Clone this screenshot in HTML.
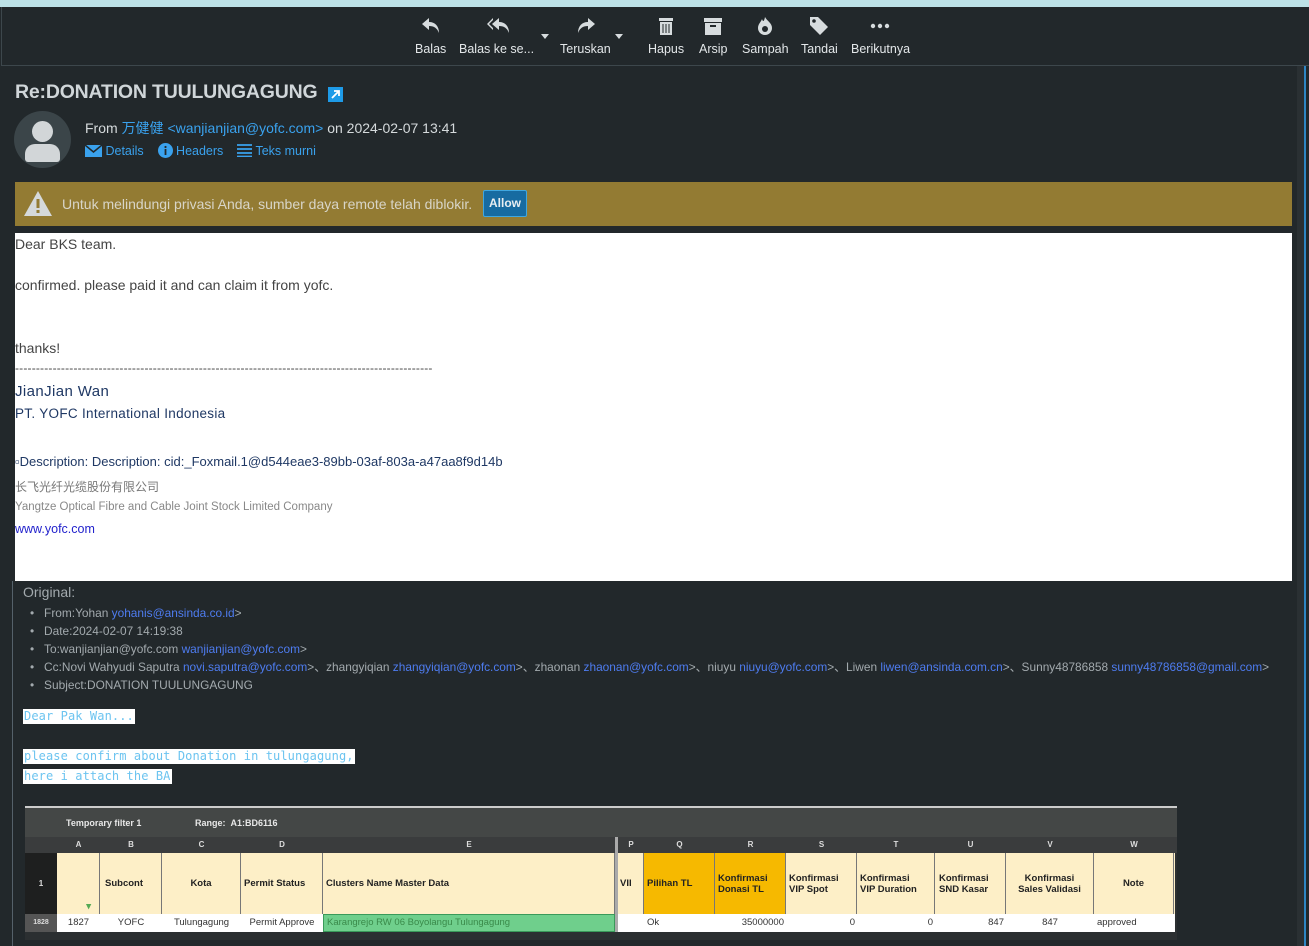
<!DOCTYPE html>
<html><head><meta charset="utf-8"><style>
*{margin:0;padding:0;box-sizing:border-box}
body{width:1309px;height:946px;overflow:hidden;background:#22282b;font-family:"Liberation Sans","Noto Sans CJK SC",sans-serif;position:relative;color:#d5dadc}
.abs{position:absolute}
.tb{position:absolute;top:0;left:0;width:1309px;height:7px;background:#bde2e7}
.tool{position:absolute;top:7px;left:1px;width:1308px;height:59px;border-bottom:1px solid #3d474c;border-left:1px solid #3d474c}
.btn{position:absolute;top:42px;font-size:12.5px;color:#e3e7e9;white-space:nowrap}
.ic{position:absolute;top:16px}
a,.lk{color:#3aa2ee;text-decoration:none}
.body{position:absolute;left:15px;top:233px;width:1277px;height:348px;background:#fff;color:#444;font-size:14px}
.orig{font-size:12px;color:#a3aaae;white-space:nowrap}
.orig .b{color:#4e7cf0}
.mono{font-family:"DejaVu Sans Mono","Liberation Mono",monospace;font-size:12px;color:#6cc4f0;background:#fff;position:absolute;left:23px;padding:0 1px;height:15px;line-height:15px;letter-spacing:.1px}
.cell{position:absolute;font-family:"Liberation Sans",sans-serif;font-size:9.5px;color:#222;font-weight:bold;display:flex;align-items:center;border-right:1px solid #777}
</style></head><body>
<div class="tb"></div>
<div class="tool"></div>
<div class="abs" style="left:1304px;top:66px;width:2px;height:880px;background:#2e86c4"></div>
<div class="abs" style="left:1297px;top:66px;width:7px;height:880px;background:#2a3033"></div>

<svg class="ic" style="left:420px" width="22" height="20" viewBox="0 0 22 20"><path d="M9 2 L2 8 L9 14 V10 C14 10 17 12 19 17 C19 10 15 6 9 6 Z" fill="#d7dcde"/></svg>
<div class="btn" style="left:415px">Balas</div>
<svg class="ic" style="left:486px" width="26" height="20" viewBox="0 0 26 20"><path d="M7 2 L1 8 L7 14 V12 L3 8 L7 4Z M13 2 L6 8 L13 14 V10 C18 10 21 12 23 17 C23 10 19 6 13 6Z" fill="#d7dcde"/></svg>
<div class="btn" style="left:459px">Balas ke se...</div>
<div class="abs" style="left:541px;top:34px;border:4px solid transparent;border-top:5px solid #d7dcde"></div>
<svg class="ic" style="left:575px" width="22" height="20" viewBox="0 0 22 20"><path d="M13 2 L20 8 L13 14 V10 C8 10 5 12 3 17 C3 10 7 6 13 6 Z" fill="#d7dcde"/></svg>
<div class="btn" style="left:560px">Teruskan</div>
<div class="abs" style="left:615px;top:34px;border:4px solid transparent;border-top:5px solid #d7dcde"></div>
<svg class="ic" style="left:658px" width="16" height="20" viewBox="0 0 16 20"><path d="M1 2h14v3H1z M2 6h12v13H2z" fill="#d7dcde"/><path d="M5 8v9M8 8v9M11 8v9" stroke="#22282b" stroke-width="1"/></svg>
<div class="btn" style="left:648px">Hapus</div>
<svg class="ic" style="left:703px" width="20" height="20" viewBox="0 0 20 20"><path d="M1 2h18v4H1z M2 7h16v12H2z" fill="#d7dcde"/><path d="M7 10h6" stroke="#22282b" stroke-width="2"/></svg>
<div class="btn" style="left:699px">Arsip</div>
<svg class="ic" style="left:756px" width="18" height="20" viewBox="0 0 18 20"><path d="M9 1 C11 5 16 7 16 12 A7 7 0 0 1 2 12 C2 8 5 6 6 3 C7 6 8 6 9 1Z" fill="#d7dcde"/><circle cx="9" cy="13" r="3" fill="#22282b"/></svg>
<div class="btn" style="left:742px">Sampah</div>
<svg class="ic" style="left:809px" width="20" height="20" viewBox="0 0 20 20"><path d="M1 1h8l10 10-8 8L1 9z" fill="#d7dcde"/><circle cx="5" cy="5" r="1.8" fill="#22282b"/></svg>
<div class="btn" style="left:801px">Tandai</div>
<svg class="ic" style="left:870px" width="20" height="20" viewBox="0 0 20 20"><circle cx="3" cy="10" r="2.2" fill="#d7dcde"/><circle cx="10" cy="10" r="2.2" fill="#d7dcde"/><circle cx="17" cy="10" r="2.2" fill="#d7dcde"/></svg>
<div class="btn" style="left:851px">Berikutnya</div>

<div class="abs" style="left:15px;top:81px;font-size:19.5px;font-weight:bold;color:#d0d6d9;letter-spacing:-0.2px">Re:DONATION TUULUNGAGUNG</div>
<svg class="abs" style="left:328px;top:87px" width="15" height="15" viewBox="0 0 15 15"><rect width="15" height="15" fill="#1e9be8"/><path d="M4 11 L11 4 M6 4h5v5" stroke="#fff" stroke-width="1.8" fill="none"/></svg>
<div class="abs" style="left:14px;top:111px;width:57px;height:57px;border-radius:50%;background:#3b4549;overflow:hidden">
 <div class="abs" style="left:18px;top:10px;width:21px;height:21px;border-radius:50%;background:#d2d6d8"></div>
 <div class="abs" style="left:11px;top:33px;width:35px;height:18px;border-radius:10px 10px 3px 3px;background:#d2d6d8"></div>
</div>
<div class="abs" style="left:85px;top:118px;font-size:14px;color:#d5dadc">From <span class="lk">万健健 &lt;wanjianjian@yofc.com&gt;</span> on 2024-02-07 13:41</div>
<div class="abs" style="left:85px;top:143px;font-size:12.5px;color:#3aa2ee;white-space:nowrap">
<svg width="17" height="12" viewBox="0 0 17 12" style="vertical-align:-2px"><rect width="17" height="12" fill="#3aa2ee"/><path d="M0 0 L8.5 7 L17 0" stroke="#22282b" stroke-width="1.5" fill="none"/></svg> Details &nbsp;&nbsp;
<svg width="15" height="15" viewBox="0 0 15 15" style="vertical-align:-3px"><circle cx="7.5" cy="7.5" r="7.5" fill="#3aa2ee"/><rect x="6.6" y="6" width="1.8" height="6" fill="#22282b"/><circle cx="7.5" cy="4" r="1.1" fill="#22282b"/></svg> Headers &nbsp;&nbsp;
<svg width="15" height="13" viewBox="0 0 15 13" style="vertical-align:-2px"><path d="M0 1h15M0 5h15M0 9h15M0 12.5h15" stroke="#3aa2ee" stroke-width="1.8"/></svg> Teks murni</div>

<div class="abs" style="left:15px;top:182px;width:1277px;height:44px;background:#937b33"></div>
<svg class="abs" style="left:23px;top:190px" width="30" height="27" viewBox="0 0 30 27"><path d="M15 1 L29 26 H1Z" fill="#d5d9da"/><rect x="13.5" y="9" width="3" height="9" fill="#937b33"/><rect x="13.5" y="20" width="3" height="3" fill="#937b33"/></svg>
<div class="abs" style="left:62px;top:196px;font-size:14px;color:#d8d5c8">Untuk melindungi privasi Anda, sumber daya remote telah diblokir.</div>
<div class="abs" style="left:483px;top:190px;width:44px;height:27px;background:#176ba1;border:1px solid #3fa7e0;border-radius:2px;color:#e8eef2;font-size:12px;font-weight:bold;text-align:center;line-height:25px">Allow</div>

<div class="body">
 <div class="abs" style="left:0;top:3px">Dear BKS team.</div>
 <div class="abs" style="left:0;top:44px">confirmed. please paid it and can claim it from yofc.</div>
 <div class="abs" style="left:0;top:107px">thanks!</div>
 <div class="abs" style="left:0;top:128px;font-size:12px;letter-spacing:0.18px">----------------------------------------------------------------------------------------------------</div>
 <div class="abs" style="left:0;top:150px;font-size:15px;color:#1f3864;letter-spacing:.4px">JianJian Wan</div>
 <div class="abs" style="left:0;top:173px;font-size:13.5px;color:#1f3864;letter-spacing:.3px">PT. YOFC International Indonesia</div>
 <div class="abs" style="left:0;top:221px;font-size:13px;color:#1f3864">▫Description: Description: cid:_Foxmail.1@d544eae3-89bb-03af-803a-a47aa8f9d14b</div>
 <div class="abs" style="left:0;top:245px;font-size:12px;color:#777">长飞光纤光缆股份有限公司</div>
 <div class="abs" style="left:0;top:268px;font-size:11.5px;color:#888">Yangtze Optical Fibre and Cable Joint Stock Limited Company</div>
 <div class="abs" style="left:0;top:289px;font-size:12.5px;color:#2222cc">www.yofc.com</div>
</div>

<div class="abs" style="left:12px;top:581px;width:1px;height:365px;background:#55616a"></div>
<div class="abs orig" style="left:23px;top:584px;font-size:14px">Original:</div>
<div class="abs orig" style="left:30px;top:604px;line-height:18px;transform:scaleX(.99);transform-origin:left">
•&nbsp;&nbsp;&nbsp;From:Yohan <span class="b">yohanis@ansinda.co.id</span>&gt;<br>
•&nbsp;&nbsp;&nbsp;Date:2024-02-07 14:19:38<br>
•&nbsp;&nbsp;&nbsp;To:wanjianjian@yofc.com <span class="b">wanjianjian@yofc.com</span>&gt;<br>
•&nbsp;&nbsp;&nbsp;Cc:Novi Wahyudi Saputra <span class="b">novi.saputra@yofc.com</span>&gt;、zhangyiqian <span class="b">zhangyiqian@yofc.com</span>&gt;、zhaonan <span class="b">zhaonan@yofc.com</span>&gt;、niuyu <span class="b">niuyu@yofc.com</span>&gt;、Liwen <span class="b">liwen@ansinda.com.cn</span>&gt;、Sunny48786858 <span class="b">sunny48786858@gmail.com</span>&gt;<br>
•&nbsp;&nbsp;&nbsp;Subject:DONATION TUULUNGAGUNG</div>
<div class="mono" style="top:709px">Dear Pak Wan...</div>
<div class="mono" style="top:749px">please confirm about Donation in tulungagung,</div>
<div class="mono" style="top:769px">here i attach the BA</div>

<div class="abs" style="left:25px;top:806px;width:1152px;height:134px;background:#2b2f31">
 <div class="abs" style="left:0;top:0;width:1152px;height:2px;background:#ccc"></div>
 <div class="abs" style="left:0;top:2px;width:1152px;height:29px;background:#444746;font-size:9px;color:#e8e8e8;font-weight:bold"><span class="abs" style="left:41px;top:10px">Temporary filter 1</span><span class="abs" style="left:170px;top:10px">Range: &nbsp;A1:BD6116</span></div>
 <div class="abs" style="left:0;top:31px;width:1152px;height:16px;background:#3a3c3d"></div>
 <div class="abs" style="left:0;top:47px;width:32px;height:61px;background:#1e1f1f;color:#ddd;font-size:8px;font-weight:bold;text-align:center;line-height:61px">1</div>
 <div class="abs" style="left:0;top:108px;width:32px;height:18px;background:#555;color:#ddd;font-size:7px;font-weight:bold;text-align:center;line-height:18px">1828</div>
 <div class="abs" style="left:32px;top:47px;width:1118px;height:61px;background:#fdefc7"></div>
 <div class="abs" style="left:32px;top:108px;width:1118px;height:18px;background:#fff"></div>
 <div class="abs" style="left:590px;top:31px;width:3px;height:95px;background:#aaa"></div>
 <div class="abs" style="left:619px;top:47px;width:142px;height:61px;background:#f6b900"></div>
 <div class="abs" style="left:298px;top:108px;width:292px;height:18px;background:#6fcf8c;border:1px solid #3a9a5a"></div>
</div>
<div class="abs" style="left:25px;top:837px;width:1152px;height:100px;font-size:8px;color:#ddd;font-weight:bold">
 <div class="abs" style="left:32px;top:0;width:43px;text-align:center;line-height:16px">A</div>
 <div class="abs" style="left:75px;top:0;width:62px;text-align:center;line-height:16px">B</div>
 <div class="abs" style="left:137px;top:0;width:79px;text-align:center;line-height:16px">C</div>
 <div class="abs" style="left:216px;top:0;width:82px;text-align:center;line-height:16px">D</div>
 <div class="abs" style="left:298px;top:0;width:292px;text-align:center;line-height:16px">E</div>
 <div class="abs" style="left:593px;top:0;width:26px;text-align:center;line-height:16px">P</div>
 <div class="abs" style="left:619px;top:0;width:71px;text-align:center;line-height:16px">Q</div>
 <div class="abs" style="left:690px;top:0;width:71px;text-align:center;line-height:16px">R</div>
 <div class="abs" style="left:761px;top:0;width:71px;text-align:center;line-height:16px">S</div>
 <div class="abs" style="left:832px;top:0;width:78px;text-align:center;line-height:16px">T</div>
 <div class="abs" style="left:910px;top:0;width:71px;text-align:center;line-height:16px">U</div>
 <div class="abs" style="left:981px;top:0;width:88px;text-align:center;line-height:16px">V</div>
 <div class="abs" style="left:1069px;top:0;width:80px;text-align:center;line-height:16px">W</div>
</div>
<div class="abs" style="left:25px;top:853px;width:1152px;height:61px">
 <div class="cell" style="left:32px;top:0;width:43px;height:61px;color:#5a5"><span style="position:absolute;right:8px;bottom:2px">▾</span></div>
 <div class="cell" style="left:75px;top:0;width:62px;height:61px;padding-left:5px">Subcont</div>
 <div class="cell" style="left:137px;top:0;width:79px;height:61px;justify-content:center">Kota</div>
 <div class="cell" style="left:216px;top:0;width:82px;height:61px;padding-left:3px">Permit Status</div>
 <div class="cell" style="left:298px;top:0;width:292px;height:61px;padding-left:3px">Clusters Name Master Data</div>
 <div class="cell" style="left:593px;top:0;width:26px;height:61px;padding-left:2px">VII</div>
 <div class="cell" style="left:619px;top:0;width:71px;height:61px;padding-left:3px">Pilihan TL</div>
 <div class="cell" style="left:690px;top:0;width:71px;height:61px;padding-left:3px">Konfirmasi<br>Donasi TL</div>
 <div class="cell" style="left:761px;top:0;width:71px;height:61px;padding-left:3px">Konfirmasi<br>VIP Spot</div>
 <div class="cell" style="left:832px;top:0;width:78px;height:61px;padding-left:3px">Konfirmasi<br>VIP Duration</div>
 <div class="cell" style="left:910px;top:0;width:71px;height:61px;padding-left:4px">Konfirmasi<br>SND Kasar</div>
 <div class="cell" style="left:981px;top:0;width:88px;height:61px;justify-content:center;text-align:center">Konfirmasi<br>Sales Validasi</div>
 <div class="cell" style="left:1069px;top:0;width:80px;height:61px;justify-content:center">Note</div>
</div>
<div class="abs" style="left:25px;top:914px;width:1152px;height:18px;font-size:9.5px;color:#333;line-height:18px">
 <span class="abs" style="left:32px;width:43px;text-align:center">1827</span>
 <span class="abs" style="left:75px;width:62px;text-align:center">YOFC</span>
 <span class="abs" style="left:137px;width:79px;text-align:center">Tulungagung</span>
 <span class="abs" style="left:216px;width:82px;text-align:center">Permit Approve</span>
 <span class="abs" style="left:302px;color:#3a8a4a">Karangrejo RW 06 Boyolangu Tulungagung</span>
 <span class="abs" style="left:622px">Ok</span>
 <span class="abs" style="left:690px;width:69px;text-align:right">35000000</span>
 <span class="abs" style="left:761px;width:69px;text-align:right">0</span>
 <span class="abs" style="left:832px;width:76px;text-align:right">0</span>
 <span class="abs" style="left:910px;width:69px;text-align:right">847</span>
 <span class="abs" style="left:981px;width:88px;text-align:center">847</span>
 <span class="abs" style="left:1072px">approved</span>
</div>
</body></html>
